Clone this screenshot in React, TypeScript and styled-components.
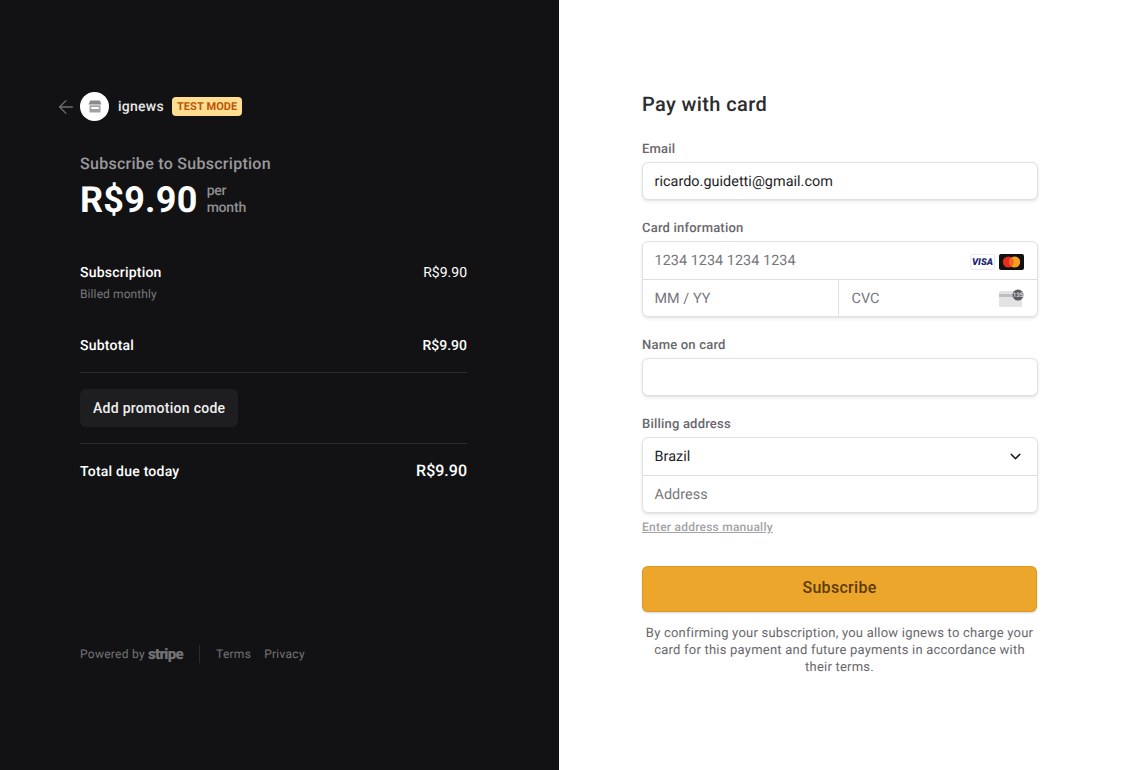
import styled, { createGlobalStyle } from "styled-components";
import { ArrowLeft, ChevronDown } from "lucide-react";

const GlobalStyle = createGlobalStyle`
  html, body {
    margin: 0;
    padding: 0;
    background: #fff;
    font-family: Roboto, "Liberation Sans", sans-serif;
    text-rendering: geometricPrecision;
    -webkit-font-smoothing: antialiased;
  }
  * { box-sizing: border-box; }
`;

const Page = styled.div`
  display: flex;
  width: 1132px;
  height: 770px;
  overflow: hidden;
`;

const Summary = styled.div`
  display: flex;
  flex-direction: column;
  width: 559px;
  padding: 92px 92px 0 80px;
  background: #121214;
  color: #fff;
`;

const Brand = styled.div`
  display: flex;
  align-items: center;
  height: 29px;
  margin-left: -25px;
  color: #6f6f72;
`;

const Logo = styled.div`
  display: flex;
  align-items: center;
  justify-content: center;
  width: 29px;
  height: 29px;
  margin-left: 3px;
  border-radius: 50%;
  background: #fff;
`;

const BrandName = styled.span`
  margin-left: 9px;
  font-size: 14px;
  font-weight: 500;
  letter-spacing: 0.25px;
  color: #e8e8e9;
`;

const TestBadge = styled.span`
  margin-left: 8px;
  padding: 0 5px;
  height: 19px;
  line-height: 20px;
  border-radius: 4px;
  background: #ffde92;
  color: #bb5504;
  font-size: 11px;
  font-weight: 700;
  letter-spacing: 0.1px;
`;

const Subscribe = styled.div`
  margin-top: 32px;
  font-size: 16px;
  line-height: 22px;
  font-weight: 500;
  letter-spacing: 0.28px;
  color: #9a9a9c;
`;

const PriceRow = styled.div`
  display: flex;
  align-items: center;
  height: 36px;
  margin-top: 7px;
`;

const Price = styled.span`
  font-size: 36px;
  font-weight: 700;
  letter-spacing: 0.25px;
`;

const Period = styled.span`
  margin-left: 9px;
  width: 40px;
  font-size: 14px;
  line-height: 17px;
  font-weight: 500;
  letter-spacing: -0.2px;
  color: #8f8f91;
`;

const LineItem = styled.div<{ $top: number }>`
  display: flex;
  justify-content: space-between;
  align-items: center;
  margin-top: ${(p) => p.$top}px;
  font-size: 14px;
  font-weight: 500;
  line-height: 20px;
`;

const ItemName = styled.span`
  letter-spacing: 0.22px;
`;

const Muted = styled.div`
  margin-top: 3px;
  font-size: 12px;
  line-height: 16px;
  letter-spacing: 0.1px;
  color: #77777a;
`;

const Divider = styled.div<{ $top: number }>`
  height: 1px;
  margin-top: ${(p) => p.$top}px;
  background: #2b2b2e;
`;

const PromoButton = styled.button`
  align-self: flex-start;
  height: 38px;
  margin-top: 16px;
  padding: 0 13px;
  border: 0;
  border-radius: 6px;
  background: #1e1e21;
  color: #f0f0f0;
  font-family: inherit;
  font-size: 14px;
  font-weight: 500;
  letter-spacing: 0.28px;
`;

const ItemPrice = styled.span`
  font-weight: 400;
`;

const BoldPrice = styled.span`
  font-weight: 500;
`;

const TotalPrice = styled.span`
  margin-top: -2px;
  font-size: 16px;
  font-weight: 500;
`;

const Footer = styled.div`
  display: flex;
  align-items: center;
  margin-top: 163px;
  font-size: 12px;
  letter-spacing: 0.28px;
  color: #737376;
`;

const StripeMark = styled.span`
  margin-left: 3px;
  font-size: 15px;
  font-weight: 900;
  letter-spacing: -0.7px;
  color: #737376;
`;

const FooterRule = styled.span`
  width: 1px;
  height: 18px;
  margin: 0 16px;
  background: #2b2b2e;
`;

const FooterLink = styled.span`
  margin-right: 13px;
`;

const Checkout = styled.div`
  flex: 1;
  padding: 92px 95px 0 83px;
  color: #303033;
`;

const Title = styled.h1`
  margin: 0;
  font-size: 20px;
  line-height: 24px;
  font-weight: 500;
  letter-spacing: 0.38px;
  color: #2c2c2e;
`;

const FieldLabel = styled.div<{ $top: number }>`
  margin-top: ${(p) => p.$top}px;
  margin-bottom: 4px;
  font-size: 13px;
  line-height: 16px;
  font-weight: 500;
  letter-spacing: 0.2px;
  color: #68686c;
`;

const Group = styled.div`
  margin: 0 -0.5px;
  border: 1px solid #e0e0e0;
  border-radius: 6px;
  background: #fff;
  box-shadow: 0 2px 4px rgba(0, 0, 0, 0.07), 0 1px 1.5px rgba(0, 0, 0, 0.05);
`;

const Row = styled.div<{ $divided?: boolean }>`
  display: flex;
  align-items: center;
  height: 37px;
  border-top: ${(p) => (p.$divided ? "1px solid #e0e0e0" : "0")};

  &:only-child {
    height: 36px;
  }
`;

const Cell = styled.div<{ $divided?: boolean; $basis?: number }>`
  flex: ${(p) => (p.$basis ? `0 0 ${p.$basis}px` : "1")};
  display: flex;
  align-items: center;
  justify-content: space-between;
  height: 100%;
  padding: 0 12.5px 0 ${(p) => (p.$divided ? 12.5 : 12)}px;
  border-left: ${(p) => (p.$divided ? "1px solid #e0e0e0" : "0")};
  font-size: 14px;
  min-width: 0;
`;

const Value = styled.span`
  font-size: 14.4px;
  letter-spacing: 0.04px;
  color: #242426;
`;

const Placeholder = styled.span`
  font-size: 14.4px;
  letter-spacing: 0.05px;
  color: #77777b;
`;

const CardIcons = styled.div`
  display: flex;
  align-items: center;
  gap: 4px;
  margin-top: 2px;
`;

const ManualLink = styled.div`
  margin-top: 7px;
  font-size: 12px;
  line-height: 15px;
  font-weight: 500;
  letter-spacing: 0.23px;
  color: #a3a3a6;
  text-decoration: underline;
`;

const PayButton = styled.button`
  display: block;
  width: 100%;
  height: 46px;
  margin-top: 31px;
  padding: 0 0 3px;
  border: 0;
  border-radius: 6px;
  background: #eca62c;
  box-shadow: 0 1px 2px rgba(0, 0, 0, 0.18), inset 0 0 0 1px rgba(200, 130, 20, 0.35);
  color: #5d3b07;
  font-family: inherit;
  font-size: 16px;
  font-weight: 500;
  letter-spacing: 0.3px;
`;

const Terms = styled.p`
  margin: 13px 0 0;
  padding: 0;
  font-size: 13px;
  line-height: 17px;
  letter-spacing: 0.22px;
  text-align: center;
  color: #68686c;
`;

const StoreIcon = () => (
  <svg width="14" height="13" viewBox="0 0 14 13" aria-hidden="true">
    <path d="M2.2 0.5h9.6L13.5 4.4H.5z" fill="#8a8a8d" />
    <rect x="1.5" y="5.2" width="11" height="7.3" rx="0.8" fill="#a2a2a5" />
    <rect x="3.2" y="7" width="7.6" height="2" fill="#fff" />
  </svg>
);

const VisaIcon = () => (
  <svg width="25" height="16" viewBox="0 0 25 16" aria-hidden="true">
    <rect x="0.5" y="0.5" width="24" height="15" rx="1.5" fill="#fff" stroke="#ececf0" />
    <text
      x="12.5"
      y="11.2"
      textAnchor="middle"
      fontFamily="Roboto, sans-serif"
      fontSize="9.5"
      fontStyle="italic"
      fontWeight="900"
      fill="#1a1f71"
    >
      VISA
    </text>
  </svg>
);

const MastercardIcon = () => (
  <svg width="25" height="16" viewBox="0 0 25 16" aria-hidden="true">
    <rect width="25" height="16" rx="2" fill="#111" />
    <circle cx="9.3" cy="8" r="5.5" fill="#e32b1e" />
    <circle cx="15.7" cy="8" r="5.5" fill="#f7a01e" />
    <path d="M12.5 3.5a5.5 5.5 0 0 1 0 9a5.5 5.5 0 0 1 0-9z" fill="#f4611f" />
  </svg>
);

const CvcIcon = () => (
  <svg width="25" height="18" viewBox="0 0 25 18" aria-hidden="true">
    <rect x="0" y="2" width="23" height="16" rx="1.5" fill="#e3e3e5" />
    <rect x="0" y="5" width="23" height="3" fill="#bfbfc2" />
    <circle cx="19" cy="6" r="5.5" fill="#5c5c60" />
    <text x="19" y="8.2" textAnchor="middle" fontFamily="Roboto, sans-serif" fontSize="6.2" fontWeight="500" fill="#e8e8e8">
      135
    </text>
  </svg>
);

const App = () => (
  <Page>
    <GlobalStyle />
    <Summary>
      <Brand>
        <ArrowLeft size={22} strokeWidth={1.4} />
        <Logo>
          <StoreIcon />
        </Logo>
        <BrandName>ignews</BrandName>
        <TestBadge>TEST MODE</TestBadge>
      </Brand>
      <Subscribe>Subscribe to Subscription</Subscribe>
      <PriceRow>
        <Price>R$9.90</Price>
        <Period>per month</Period>
      </PriceRow>
      <LineItem $top={45}>
        <ItemName>Subscription</ItemName>
        <ItemPrice>R$9.90</ItemPrice>
      </LineItem>
      <Muted>Billed monthly</Muted>
      <LineItem $top={34}>
        <ItemName>Subtotal</ItemName>
        <BoldPrice>R$9.90</BoldPrice>
      </LineItem>
      <Divider $top={16} />
      <PromoButton>Add promotion code</PromoButton>
      <Divider $top={16} />
      <LineItem $top={18}>
        <ItemName>Total due today</ItemName>
        <TotalPrice>R$9.90</TotalPrice>
      </LineItem>
      <Footer>
        <span>Powered by</span>
        <StripeMark>stripe</StripeMark>
        <FooterRule />
        <FooterLink>Terms</FooterLink>
        <FooterLink>Privacy</FooterLink>
      </Footer>
    </Summary>
    <Checkout>
      <Title>Pay with card</Title>
      <FieldLabel $top={26}>Email</FieldLabel>
      <Group>
        <Row>
          <Cell>
            <Value>ricardo.guidetti@gmail.com</Value>
          </Cell>
        </Row>
      </Group>
      <FieldLabel $top={21}>Card information</FieldLabel>
      <Group>
        <Row>
          <Cell>
            <Placeholder>1234 1234 1234 1234</Placeholder>
            <CardIcons>
              <VisaIcon />
              <MastercardIcon />
            </CardIcons>
          </Cell>
        </Row>
        <Row $divided>
          <Cell $basis={195.5}>
            <Placeholder>MM / YY</Placeholder>
          </Cell>
          <Cell $divided>
            <Placeholder>CVC</Placeholder>
            <CvcIcon />
          </Cell>
        </Row>
      </Group>
      <FieldLabel $top={21}>Name on card</FieldLabel>
      <Group>
        <Row />
      </Group>
      <FieldLabel $top={21}>Billing address</FieldLabel>
      <Group>
        <Row>
          <Cell>
            <Value>Brazil</Value>
            <ChevronDown size={17} strokeWidth={2} color="#1f1f21" />
          </Cell>
        </Row>
        <Row $divided>
          <Cell>
            <Placeholder>Address</Placeholder>
          </Cell>
        </Row>
      </Group>
      <ManualLink>Enter address manually</ManualLink>
      <PayButton>Subscribe</PayButton>
      <Terms>
        By confirming your subscription, you allow ignews to charge your card for this payment and future payments in
        accordance with their terms.
      </Terms>
    </Checkout>
  </Page>
);

export default App;
